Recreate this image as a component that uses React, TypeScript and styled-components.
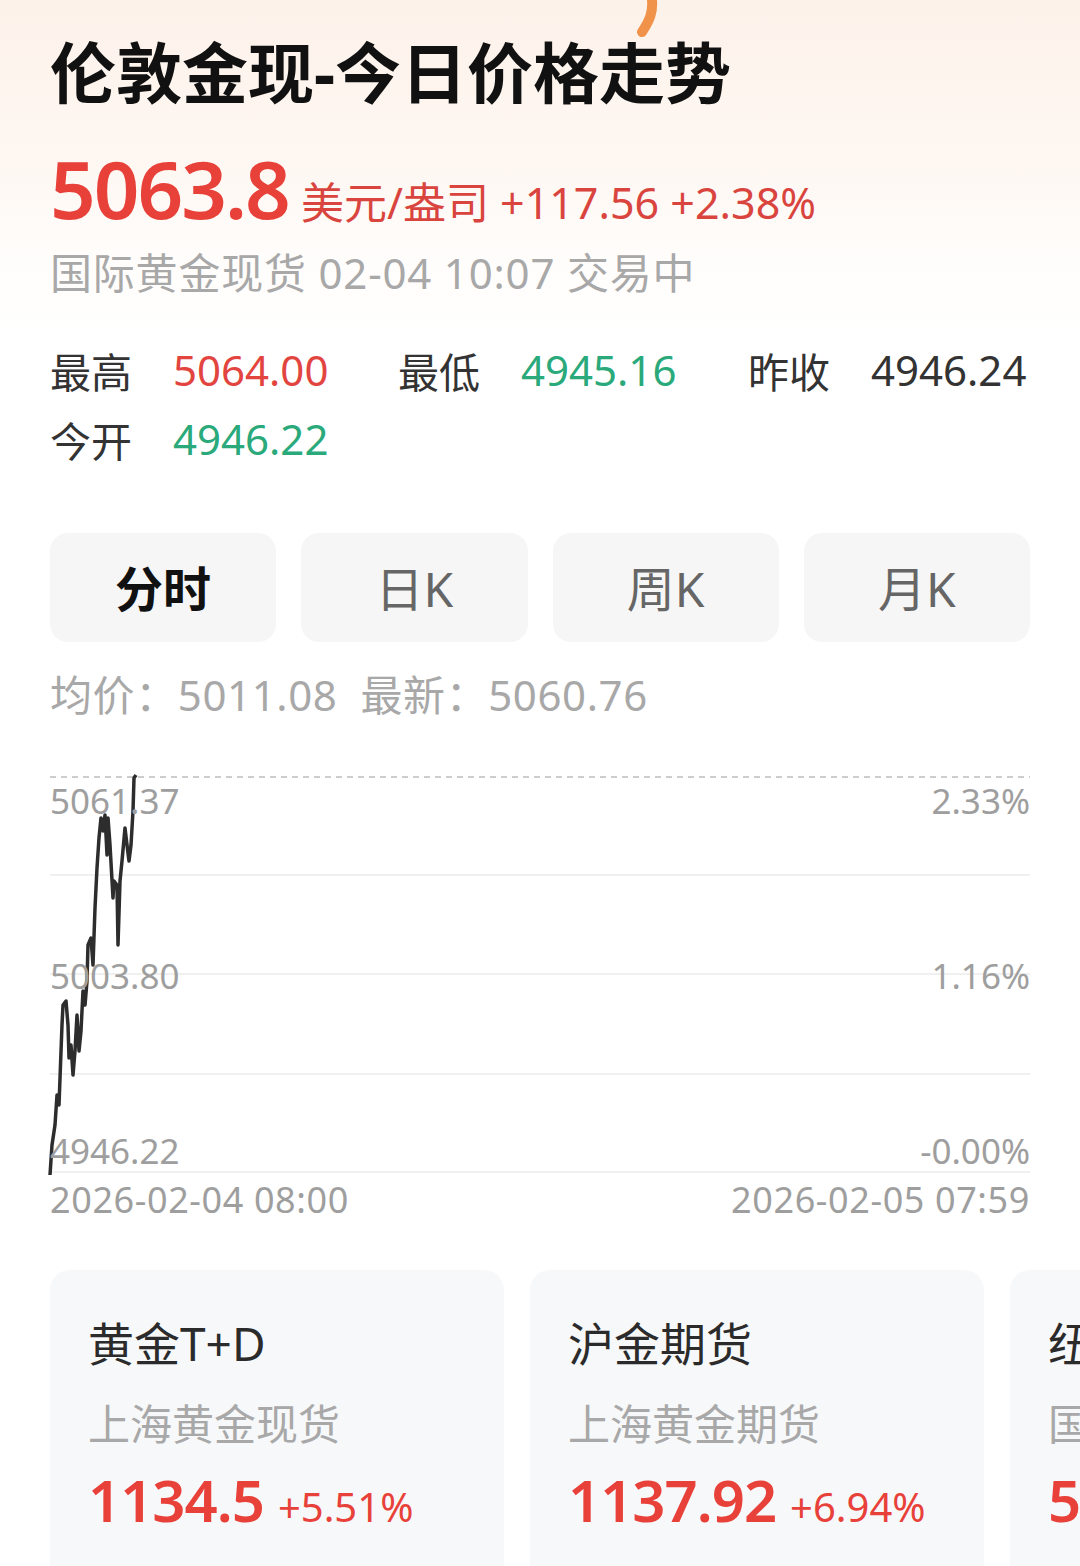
import React, { useState } from 'react';
import styled, { createGlobalStyle } from 'styled-components';

const GlobalStyle = createGlobalStyle`
  body {
    margin: 0;
    background: #fff;
    font-family: "Noto Sans", "Noto Sans CJK SC", sans-serif;
  }
`;

type Stat = { label: string; value: string; tone: 'up' | 'down' | 'flat' };

const stats: Stat[] = [
  { label: '最高', value: '5064.00', tone: 'up' },
  { label: '最低', value: '4945.16', tone: 'down' },
  { label: '昨收', value: '4946.24', tone: 'flat' },
  { label: '今开', value: '4946.22', tone: 'down' },
];

const tabs = ['分时', '日K', '周K', '月K'];

const cards = [
  { name: '黄金T+D', desc: '上海黄金现货', price: '1134.5', change: '+5.51%' },
  { name: '沪金期货', desc: '上海黄金期货', price: '1137.92', change: '+6.94%' },
  { name: '纽约期金', desc: '国际黄金期货', price: '5092.3', change: '+2.61%' },
];

// price line, points relative to the chart box (980 x 397)
const linePoints = [
  [0, 399], [2, 369], [5, 349], [7, 319], [9, 329], [12, 249], [13, 229], [16, 225],
  [18, 249], [19, 282], [21, 269], [23, 299], [25, 275], [27, 239], [29, 275], [31, 255],
  [33, 215], [35, 229], [37, 205], [38, 169], [41, 162], [43, 189], [45, 132], [47, 92],
  [49, 62], [51, 42], [53, 55], [55, 39], [57, 79], [58, 42], [60, 69], [63, 122],
  [64, 105], [67, 109], [68, 169], [70, 105], [72, 85], [75, 52], [77, 69], [79, 85],
  [81, 69], [83, 35], [84, 2], [86, -1],
];

const toneColor = (tone: Stat['tone']) =>
  tone === 'up' ? '#e2453f' : tone === 'down' ? '#2aa97b' : '#333';

function App() {
  const [active, setActive] = useState(0);

  return (
    <Page>
      <GlobalStyle />
      <Scribble width="40" height="40" viewBox="0 0 40 40">
        <path d="M22 0 C23 12 20 20 12 32" stroke="#f0924a" strokeWidth="10" fill="none" strokeLinecap="round" />
      </Scribble>

      <Title>伦敦金现-今日价格走势</Title>

      <PriceRow>
        <BigPrice>5063.8</BigPrice>
        <PriceMeta>美元/盎司 +117.56 +2.38%</PriceMeta>
      </PriceRow>

      <SubLine>国际黄金现货 02-04 10:07 交易中</SubLine>

      <StatsGrid>
        {stats.map((s) => (
          <StatItem key={s.label}>
            <StatLabel>{s.label}</StatLabel>
            <StatValue $color={toneColor(s.tone)}>{s.value}</StatValue>
          </StatItem>
        ))}
      </StatsGrid>

      <TabBar>
        {tabs.map((t, i) => (
          <Tab key={t} $active={i === active} onClick={() => setActive(i)}>
            {t}
          </Tab>
        ))}
      </TabBar>

      <AvgLine>均价：5011.08&nbsp;&nbsp;最新：5060.76</AvgLine>

      <Chart>
        <svg width="980" height="397" viewBox="0 0 980 397">
          <line x1="0" y1="1" x2="980" y2="1" stroke="#bdbdbd" strokeWidth="1.5" strokeDasharray="6 5" />
          {[99, 198, 298, 396].map((y) => (
            <line key={y} x1="0" y1={y} x2="980" y2={y} stroke="#f0f0f0" strokeWidth="2" />
          ))}
          <polyline
            points={linePoints.map(([x, y]) => `${x},${y}`).join(' ')}
            fill="none"
            stroke="#2d2d2d"
            strokeWidth="3.5"
            strokeLinejoin="round"
          />
        </svg>
        <AxisLayer>
          <AxisRow><span>5061.37</span><span>2.33%</span></AxisRow>
          <AxisRow><span>5003.80</span><span>1.16%</span></AxisRow>
          <AxisRow><span>4946.22</span><span>-0.00%</span></AxisRow>
        </AxisLayer>
      </Chart>

      <TimeRow>
        <span>2026-02-04 08:00</span>
        <span>2026-02-05 07:59</span>
      </TimeRow>

      <CardStrip>
        {cards.map((c) => (
          <Card key={c.name}>
            <CardTitle>{c.name}</CardTitle>
            <CardDesc>{c.desc}</CardDesc>
            <CardPriceRow>
              <CardPrice>{c.price}</CardPrice>
              <CardChange>{c.change}</CardChange>
            </CardPriceRow>
          </Card>
        ))}
      </CardStrip>
    </Page>
  );
}

const Page = styled.div`
  position: relative;
  width: 1080px;
  height: 1566px;
  overflow: hidden;
  box-sizing: border-box;
  padding: 32px 50px 0;
  background: linear-gradient(180deg, #fdf2ea 0%, #fef7f2 160px, #fffdfb 260px, #fff 340px);
`;

const Scribble = styled.svg`
  position: absolute;
  top: 0;
  left: 630px;
`;

const Title = styled.h1`
  margin: 0;
  font-size: 66px;
  line-height: 80px;
  font-weight: 700;
  color: #111;
`;

const PriceRow = styled.div`
  display: flex;
  align-items: baseline;
  margin-top: 31px;
  height: 90px;
`;

const BigPrice = styled.span`
  font-size: 80px;
  line-height: 90px;
  font-weight: 600;
  color: #e8413a;
  letter-spacing: -2px;
`;

const PriceMeta = styled.span`
  margin-left: 12px;
  font-size: 43px;
  color: #d9453e;
`;

const SubLine = styled.div`
  font-size: 42px;
  line-height: 50px;
  letter-spacing: 0.8px;
  color: #a8a8a8;
  margin-top: 15px;
`;

const StatsGrid = styled.div`
  display: grid;
  grid-template-columns: 348px 350px auto;
  grid-auto-rows: 69px;
  align-items: center;
  margin-top: 37px;
`;

const StatItem = styled.div`
  display: flex;
  align-items: center;
`;

const StatLabel = styled.span`
  width: 123px;
  font-size: 41px;
  color: #333;
`;

const StatValue = styled.span<{ $color: string }>`
  font-size: 42px;
  color: ${({ $color }) => $color};
`;

const TabBar = styled.div`
  display: grid;
  grid-template-columns: repeat(4, 1fr);
  gap: 25px;
  margin-top: 60px;
`;

const Tab = styled.div<{ $active: boolean }>`
  height: 109px;
  border-radius: 18px;
  background: #f6f6f6;
  display: flex;
  align-items: center;
  justify-content: center;
  font-size: 48px;
  padding-bottom: 4px;
  box-sizing: border-box;
  font-weight: ${({ $active }) => ($active ? 700 : 400)};
  color: ${({ $active }) => ($active ? '#111' : '#666')};
  cursor: pointer;
`;

const AvgLine = styled.div`
  margin-top: 28px;
  font-size: 42px;
  line-height: 50px;
  letter-spacing: 0.6px;
  color: #a8a8a8;
`;

const Chart = styled.div`
  position: relative;
  margin-top: 56px;
  height: 397px;

  svg {
    display: block;
    overflow: visible;
  }
`;

const AxisLayer = styled.div`
  position: absolute;
  inset: 0;
  padding: 8px 0 5px;
  display: flex;
  flex-direction: column;
  justify-content: space-between;
  pointer-events: none;
`;

const AxisRow = styled.div`
  display: flex;
  justify-content: space-between;
  font-size: 35px;
  line-height: 34px;
  color: #9e9e9e;
`;

const TimeRow = styled.div`
  display: flex;
  justify-content: space-between;
  margin-top: 7px;
  font-size: 36px;
  line-height: 40px;
  letter-spacing: 0.6px;
  color: #9e9e9e;
`;

const CardStrip = styled.div`
  display: flex;
  gap: 26px;
  margin-top: 50px;
  width: 1030px;
  overflow: hidden;
`;

const Card = styled.div`
  flex: 0 0 454px;
  height: 320px;
  box-sizing: border-box;
  padding: 43px 0 0 38px;
  border-radius: 20px;
  background: #f7f8fa;
  overflow: hidden;
  white-space: nowrap;
`;

const CardTitle = styled.div`
  font-size: 46px;
  line-height: 60px;
  color: #2b2b2b;
`;

const CardDesc = styled.div`
  margin-top: 21px;
  font-size: 42px;
  line-height: 60px;
  color: #a8a8a8;
`;

const CardPriceRow = styled.div`
  display: flex;
  align-items: baseline;
  margin-top: 11px;
  height: 70px;
`;

const CardPrice = styled.span`
  font-size: 58px;
  line-height: 70px;
  font-weight: 600;
  color: #e8413a;
  letter-spacing: -1px;
`;

const CardChange = styled.span`
  margin-left: 14px;
  font-size: 40px;
  color: #e8413a;
`;

export default App;
